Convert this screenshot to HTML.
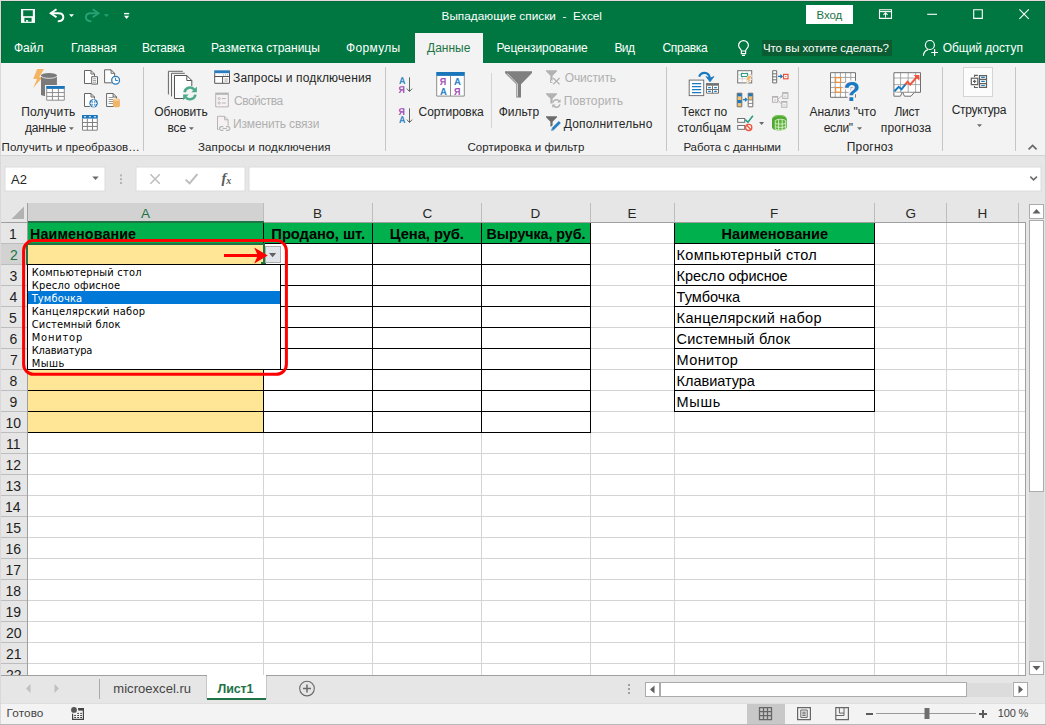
<!DOCTYPE html>
<html lang="ru"><head><meta charset="utf-8"><title>Выпадающие списки - Excel</title>
<style>
html,body{margin:0;padding:0;}
body{width:1046px;height:725px;overflow:hidden;position:relative;background:#e6e6e6;font-family:"Liberation Sans", sans-serif;}
#g{position:absolute;left:0;top:0;}
.t{position:absolute;white-space:pre;line-height:20px;height:20px;}
.dj{font-family:"DejaVu Sans Condensed", "DejaVu Sans", "Liberation Sans", sans-serif;}
</style></head><body>
<svg id="g" width="1046" height="725" viewBox="0 0 1046 725">
<rect x="0" y="0" width="1046" height="725" fill="#e6e6e6" />
<rect x="0" y="0" width="1046" height="63" fill="#007741" />
<rect x="415" y="33" width="68" height="31" fill="#f3f3f3" />
<rect x="0" y="63" width="1046" height="92" fill="#f3f3f3" />
<rect x="0" y="155" width="1046" height="1" fill="#d2d2d2" />
<rect x="762" y="40" width="130" height="16" fill="#0a5c32" />
<rect x="806" y="5" width="47" height="19" fill="#ffffff" />
<rect x="143" y="67" width="1" height="84" fill="#c6c6c6" />
<rect x="385" y="67" width="1" height="84" fill="#c6c6c6" />
<rect x="666" y="67" width="1" height="84" fill="#c6c6c6" />
<rect x="798" y="67" width="1" height="84" fill="#c6c6c6" />
<rect x="942" y="67" width="1" height="84" fill="#c6c6c6" />
<rect x="1015" y="67" width="1" height="84" fill="#c6c6c6" />
<rect x="491" y="73" width="1" height="55" fill="#d4d4d4" />
<rect x="5" y="167" width="100" height="24" fill="#ffffff" stroke="#dcdcdc" stroke-width="1"/>
<rect x="136" y="167" width="109" height="24" fill="#ffffff" stroke="#dcdcdc" stroke-width="1"/>
<rect x="249" y="167" width="792" height="24" fill="#ffffff" stroke="#dcdcdc" stroke-width="1"/>
<rect x="0" y="203" width="1026" height="19" fill="#e6e6e6" />
<rect x="0" y="222" width="28" height="453" fill="#e6e6e6" />
<rect x="28" y="223" width="997" height="452" fill="#ffffff" />
<rect x="28" y="203" width="235" height="19" fill="#d2d2d2" />
<rect x="0" y="244" width="27" height="20" fill="#d2d2d2" />
<rect x="28" y="243" width="997" height="1" fill="#d4d4d4" />
<rect x="28" y="264" width="997" height="1" fill="#d4d4d4" />
<rect x="28" y="285" width="997" height="1" fill="#d4d4d4" />
<rect x="28" y="306" width="997" height="1" fill="#d4d4d4" />
<rect x="28" y="327" width="997" height="1" fill="#d4d4d4" />
<rect x="28" y="348" width="997" height="1" fill="#d4d4d4" />
<rect x="28" y="369" width="997" height="1" fill="#d4d4d4" />
<rect x="28" y="390" width="997" height="1" fill="#d4d4d4" />
<rect x="28" y="411" width="997" height="1" fill="#d4d4d4" />
<rect x="28" y="432" width="997" height="1" fill="#d4d4d4" />
<rect x="28" y="453" width="997" height="1" fill="#d4d4d4" />
<rect x="28" y="474" width="997" height="1" fill="#d4d4d4" />
<rect x="28" y="495" width="997" height="1" fill="#d4d4d4" />
<rect x="28" y="516" width="997" height="1" fill="#d4d4d4" />
<rect x="28" y="537" width="997" height="1" fill="#d4d4d4" />
<rect x="28" y="558" width="997" height="1" fill="#d4d4d4" />
<rect x="28" y="579" width="997" height="1" fill="#d4d4d4" />
<rect x="28" y="600" width="997" height="1" fill="#d4d4d4" />
<rect x="28" y="621" width="997" height="1" fill="#d4d4d4" />
<rect x="28" y="642" width="997" height="1" fill="#d4d4d4" />
<rect x="28" y="663" width="997" height="1" fill="#d4d4d4" />
<rect x="263" y="223" width="1" height="452" fill="#d4d4d4" />
<rect x="372" y="223" width="1" height="452" fill="#d4d4d4" />
<rect x="481" y="223" width="1" height="452" fill="#d4d4d4" />
<rect x="590" y="223" width="1" height="452" fill="#d4d4d4" />
<rect x="674" y="223" width="1" height="452" fill="#d4d4d4" />
<rect x="874" y="223" width="1" height="452" fill="#d4d4d4" />
<rect x="946" y="223" width="1" height="452" fill="#d4d4d4" />
<rect x="1018" y="223" width="1" height="452" fill="#d4d4d4" />
<rect x="27" y="203" width="1" height="19" fill="#bdbdbd" />
<rect x="263" y="203" width="1" height="19" fill="#bdbdbd" />
<rect x="372" y="203" width="1" height="19" fill="#bdbdbd" />
<rect x="481" y="203" width="1" height="19" fill="#bdbdbd" />
<rect x="590" y="203" width="1" height="19" fill="#bdbdbd" />
<rect x="674" y="203" width="1" height="19" fill="#bdbdbd" />
<rect x="874" y="203" width="1" height="19" fill="#bdbdbd" />
<rect x="946" y="203" width="1" height="19" fill="#bdbdbd" />
<rect x="1018" y="203" width="1" height="19" fill="#bdbdbd" />
<rect x="0" y="243" width="27" height="1" fill="#bdbdbd" />
<rect x="0" y="264" width="27" height="1" fill="#bdbdbd" />
<rect x="0" y="285" width="27" height="1" fill="#bdbdbd" />
<rect x="0" y="306" width="27" height="1" fill="#bdbdbd" />
<rect x="0" y="327" width="27" height="1" fill="#bdbdbd" />
<rect x="0" y="348" width="27" height="1" fill="#bdbdbd" />
<rect x="0" y="369" width="27" height="1" fill="#bdbdbd" />
<rect x="0" y="390" width="27" height="1" fill="#bdbdbd" />
<rect x="0" y="411" width="27" height="1" fill="#bdbdbd" />
<rect x="0" y="432" width="27" height="1" fill="#bdbdbd" />
<rect x="0" y="453" width="27" height="1" fill="#bdbdbd" />
<rect x="0" y="474" width="27" height="1" fill="#bdbdbd" />
<rect x="0" y="495" width="27" height="1" fill="#bdbdbd" />
<rect x="0" y="516" width="27" height="1" fill="#bdbdbd" />
<rect x="0" y="537" width="27" height="1" fill="#bdbdbd" />
<rect x="0" y="558" width="27" height="1" fill="#bdbdbd" />
<rect x="0" y="579" width="27" height="1" fill="#bdbdbd" />
<rect x="0" y="600" width="27" height="1" fill="#bdbdbd" />
<rect x="0" y="621" width="27" height="1" fill="#bdbdbd" />
<rect x="0" y="642" width="27" height="1" fill="#bdbdbd" />
<rect x="0" y="663" width="27" height="1" fill="#bdbdbd" />
<rect x="0" y="222" width="1026" height="1" fill="#9f9f9f" />
<rect x="27" y="203" width="1" height="472" fill="#9f9f9f" />
<rect x="1025" y="222" width="1" height="454" fill="#9f9f9f" />
<rect x="0" y="675" width="1026" height="1" fill="#9f9f9f" />
<rect x="28" y="221" width="236" height="2" fill="#217346" />
<rect x="26" y="243" width="2" height="22" fill="#217346" />
<rect x="28" y="223" width="562" height="20" fill="#00b04c" />
<rect x="675" y="223" width="199" height="20" fill="#00b04c" />
<rect x="28" y="244" width="235" height="188" fill="#ffe696" />
<rect x="28" y="243" width="563" height="1" fill="#000000" />
<rect x="28" y="264" width="563" height="1" fill="#000000" />
<rect x="28" y="285" width="563" height="1" fill="#000000" />
<rect x="28" y="306" width="563" height="1" fill="#000000" />
<rect x="28" y="327" width="563" height="1" fill="#000000" />
<rect x="28" y="348" width="563" height="1" fill="#000000" />
<rect x="28" y="369" width="563" height="1" fill="#000000" />
<rect x="28" y="390" width="563" height="1" fill="#000000" />
<rect x="28" y="411" width="563" height="1" fill="#000000" />
<rect x="28" y="432" width="563" height="1" fill="#000000" />
<rect x="263" y="223" width="1" height="210" fill="#000000" />
<rect x="372" y="223" width="1" height="210" fill="#000000" />
<rect x="481" y="223" width="1" height="210" fill="#000000" />
<rect x="590" y="223" width="1" height="210" fill="#000000" />
<rect x="674" y="243" width="201" height="1" fill="#000000" />
<rect x="674" y="264" width="201" height="1" fill="#000000" />
<rect x="674" y="285" width="201" height="1" fill="#000000" />
<rect x="674" y="306" width="201" height="1" fill="#000000" />
<rect x="674" y="327" width="201" height="1" fill="#000000" />
<rect x="674" y="348" width="201" height="1" fill="#000000" />
<rect x="674" y="369" width="201" height="1" fill="#000000" />
<rect x="674" y="390" width="201" height="1" fill="#000000" />
<rect x="674" y="411" width="201" height="1" fill="#000000" />
<rect x="674" y="223" width="1" height="189" fill="#000000" />
<rect x="874" y="223" width="1" height="189" fill="#000000" />
<path d="M24 206.5v12.5h-12.5z" fill="#b2b2b2"/>
<rect x="26" y="243" width="238" height="2" fill="#217346" />
<rect x="26" y="243" width="2" height="22" fill="#217346" />
<rect x="263" y="243" width="2" height="21" fill="#217346" />
<rect x="261" y="262" width="5" height="3" fill="#217346" />
<rect x="27.5" y="264.5" width="253" height="105" fill="#ffffff" stroke="#000" stroke-width="1"/>
<rect x="28" y="291" width="252" height="13" fill="#0078d7" />
<rect x="265.5" y="246.5" width="15" height="16" fill="#e1e4e8" stroke="#adadad" stroke-width="1"/>
<path d="M269 253h7.2l-3.6 4.2z" fill="#606060"/>
<rect x="23.6" y="240.6" width="262.8" height="133.7" rx="10" ry="10" fill="none" stroke="#ff0000" stroke-width="3"/>
<path d="M224 255.4h35" stroke="#ff0000" stroke-width="3" fill="none"/>
<path d="M267.8 255.4L254.2 247.6L257.8 255.4L254.2 263.4Z" fill="#ff0000"/>
<rect x="1029" y="220" width="15" height="442" fill="#dcdcdc" />
<rect x="1029.5" y="204.5" width="14" height="14" fill="#ffffff" stroke="#ababab" stroke-width="1"/>
<path d="M1032.5 213.5l4 -4.5l4 4.5z" fill="#606060"/>
<rect x="1029.5" y="220.5" width="14" height="271" fill="#ffffff" stroke="#ababab" stroke-width="1"/>
<rect x="1029.5" y="661.5" width="14" height="13" fill="#ffffff" stroke="#ababab" stroke-width="1"/>
<path d="M1032.5 666l4 4.5l4 -4.5z" fill="#606060"/>
<rect x="660" y="683" width="352" height="14" fill="#dcdcdc" />
<rect x="645.5" y="682.5" width="14" height="14" fill="#ffffff" stroke="#ababab" stroke-width="1"/>
<path d="M654.5 685.5l-4.5 4l4.5 4z" fill="#606060"/>
<rect x="660.5" y="682.5" width="306" height="14" fill="#ffffff" stroke="#ababab" stroke-width="1"/>
<rect x="1013.5" y="682.5" width="14" height="14" fill="#ffffff" stroke="#ababab" stroke-width="1"/>
<path d="M1018.5 685.5l4.5 4l-4.5 4z" fill="#606060"/>
<rect x="628" y="684" width="2" height="2" fill="#a0a0a0" />
<rect x="628" y="688" width="2" height="2" fill="#a0a0a0" />
<rect x="628" y="692" width="2" height="2" fill="#a0a0a0" />
<rect x="99" y="679" width="1" height="20" fill="#ababab" />
<rect x="207" y="675" width="59" height="23" fill="#ffffff" />
<rect x="207" y="698" width="59" height="2" fill="#217346" />
<rect x="206" y="676" width="1" height="23" fill="#c8c8c8" />
<rect x="266" y="676" width="1" height="23" fill="#c8c8c8" />
<path d="M30.5 684l-4.5 4.5l4.5 4.5z" fill="#c0c0c0"/><path d="M54.5 684l4.5 4.5l-4.5 4.5z" fill="#c0c0c0"/>
<circle cx="307" cy="688.6" r="7.3" fill="none" stroke="#6a6a6a" stroke-width="1.1"/><path d="M303 688.6h8M307 684.6v8" stroke="#6a6a6a" stroke-width="1.5"/>
<rect x="0" y="703" width="1046" height="22" fill="#f3f3f3" />
<rect x="0" y="703" width="1046" height="1" fill="#dedede" />
<rect x="747" y="704" width="38" height="20" fill="#c8c8c8" />
<rect x="876" y="713" width="100" height="1" fill="#9a9a9a" />
<rect x="924.5" y="708" width="5" height="11" fill="#6e6e6e" />
<rect x="866" y="713" width="7" height="2" fill="#5a5a5a" />
<rect x="979" y="713" width="8" height="2" fill="#5a5a5a" />
<rect x="982" y="710" width="2" height="8" fill="#5a5a5a" />
<rect x="1" y="1" width="1044" height="1" fill="#0a6b38" />
<rect x="1" y="1" width="1" height="62" fill="#0a6b38" />
<rect x="1044" y="1" width="1" height="62" fill="#0a6b38" />
<rect x="0" y="0" width="1046" height="1" fill="#e2dce0" />
<rect x="0" y="0" width="1" height="725" fill="#dcd8da" />
<rect x="1045" y="0" width="1" height="725" fill="#d0d0d0" />
<rect x="0" y="724" width="1046" height="1" fill="#b8b8b8" />
<rect x="21" y="9" width="14" height="13.9" fill="#ffffff" />
<rect x="23.2" y="10.3" width="9.6" height="5.9" fill="#007741" />
<rect x="24.4" y="17.8" width="7.2" height="3.9" fill="#007741" />
<rect x="26" y="20.2" width="2.1" height="1.5" fill="#ffffff" />
<path d="M56.5 9.2L50.8 13.2L56.5 17.2" fill="none" stroke="#ffffff" stroke-width="2" />
<path d="M51.4 13.2H58.5C61.6 13.2 63.3 15 63.3 17.2C63.3 19.4 61.5 21 58.6 21.2" fill="none" stroke="#ffffff" stroke-width="2" stroke-linecap="round"/>
<path d="M69 14.2h5l-2.5 2.8z" fill="#ffffff" />
<path d="M92.7 9.2L98.4 13.2L92.7 17.2" fill="none" stroke="#27a173" stroke-width="2" />
<path d="M97.8 13.2H90.7C87.6 13.2 85.9 15 85.9 17.2C85.9 19.4 87.7 21 90.6 21.2" fill="none" stroke="#27a173" stroke-width="2" stroke-linecap="round"/>
<path d="M103.8 14.2h5.2l-2.6 2.8z" fill="#27a173" />
<rect x="124" y="12.9" width="5.2" height="1.4" fill="#ffffff" />
<path d="M124 15.8h5.2l-2.6 3.2z" fill="#ffffff" />
<path d="M879.5 9.8h12v8.6h-12z" fill="none" stroke="#ffffff" stroke-width="1.1" />
<path d="M879.5 11.6h12" fill="none" stroke="#ffffff" stroke-width="1.1" />
<path d="M885.5 17.6v-4.6M883.4 14.8l2.1 -2.1l2.1 2.1" fill="none" stroke="#ffffff" stroke-width="1.1" />
<path d="M927.2 14.3h9.8" fill="none" stroke="#ffffff" stroke-width="1.1" />
<path d="M973.7 9.8h8.6v8.6h-8.6z" fill="none" stroke="#ffffff" stroke-width="1.1" />
<path d="M1019.4 9.4l9.4 9.4M1028.8 9.4l-9.4 9.4" fill="none" stroke="#ffffff" stroke-width="1.1" />
<path d="M741.4 51C741.4 49 738.6 48.2 738.6 45.5A4.9 4.9 0 0 1 748.4 45.5C748.4 48.2 745.6 49 745.6 51V53.6H741.4Z" fill="none" stroke="#ffffff" stroke-width="1.2" />
<path d="M741.4 51h4.2M742 55.4h3" fill="none" stroke="#ffffff" stroke-width="1.2" />
<circle cx="929.9" cy="45" r="4.5" fill="none" stroke="#fff" stroke-width="1.2"/>
<path d="M923.4 55.8C923.6 52.6 925.4 50.4 928 49.6" fill="none" stroke="#ffffff" stroke-width="1.2" />
<path d="M931.2 52.5h6.8M934.6 49.1v6.8" fill="none" stroke="#ffffff" stroke-width="1.2" />
<path d="M68.9 127.2h5l-2.5 2.8z" fill="#6a6a6a" />
<path d="M188.9 127.2h5l-2.5 2.8z" fill="#6a6a6a" />
<path d="M759.1 122.10000000000001h5l-2.5 2.8z" fill="#6a6a6a" />
<path d="M857.1 127.2h5l-2.5 2.8z" fill="#6a6a6a" />
<path d="M977.0 124.2h5l-2.5 2.8z" fill="#6a6a6a" />
<path d="M1028.6 149.4l4 -4l4 4" fill="none" stroke="#6a6a6a" stroke-width="1.8" />
<path d="M1030.3 176.6l3.3 3.3l3.3 -3.3" fill="none" stroke="#6a6a6a" stroke-width="1.5" />
<path d="M37.1 69H44L39.3 77H42.9L33.2 88L37.1 78.9H33.2Z" fill="#f4b562" />
<path d="M41 75.3V94.2A7.95 2.3 0 0 0 56.9 94.2V75.3Z" fill="#7a7a7a" />
<ellipse cx="48.95" cy="75.3" rx="7.95" ry="2.3" fill="#7a7a7a"/>
<path d="M41 76A7.95 2.3 0 0 0 56.9 76" fill="none" stroke="#e8e8e8" stroke-width="0.9" />
<rect x="45" y="85" width="20.6" height="16.6" fill="#f3f3f3" />
<rect x="46.2" y="86" width="18.6" height="14.7" fill="#ffffff" />
<rect x="46.2" y="86" width="18.6" height="2.9" fill="#1a75bb" />
<path d="M46.7 88.9V100.2H64.3V88.9M52.4 89V100.2M58.4 89V100.2M46.7 92.6H64.3M46.7 96.4H64.3" fill="none" stroke="#8c8c8c" stroke-width="1" />
<path d="M84.5 70.5H91.0L94.5 74.0V83.5H84.5Z" fill="#ffffff" stroke="#666666" stroke-width="1" />
<path d="M91.0 70.5V74.0H94.5" fill="none" stroke="#666666" stroke-width="1" />
<rect x="91" y="76" width="7" height="8.6" fill="#f3f3f3" />
<path d="M91.7 76.7h5.8v7.4h-5.8z" fill="#ffffff" stroke="#666666" stroke-width="1" />
<path d="M93 78.8h3.2M93 80.5h3.2M93 82.2h3.2" fill="none" stroke="#8c8c8c" stroke-width="0.8" />
<path d="M104.6 69.8H111.1L114.6 73.3V82.8H104.6Z" fill="#ffffff" stroke="#666666" stroke-width="1" />
<path d="M111.1 69.8V73.3H114.6" fill="none" stroke="#666666" stroke-width="1" />
<circle cx="115.6" cy="80.3" r="4.6" fill="#f3f3f3"/><circle cx="115.6" cy="80.3" r="3.9" fill="#fff" stroke="#2a7ab8" stroke-width="1.3"/>
<path d="M115.6 77.8v2.7h2.2" fill="none" stroke="#2a7ab8" stroke-width="1" />
<path d="M84.5 93.5H91.0L94.5 97.0V106.5H84.5Z" fill="#ffffff" stroke="#666666" stroke-width="1" />
<path d="M91.0 93.5V97.0H94.5" fill="none" stroke="#666666" stroke-width="1" />
<circle cx="93.6" cy="103.3" r="4.9" fill="#f3f3f3"/><circle cx="93.6" cy="103.3" r="4.2" fill="#2a7ab8"/>
<path d="M90.2 103.3h6.8M93.6 100v6.6" fill="none" stroke="#fff" stroke-width="1.1" />
<ellipse cx="93.6" cy="103.3" rx="1.9" ry="3.6" fill="none" stroke="#fff" stroke-width="0.8"/>
<path d="M106.6 93.5H113.1L116.6 97.0V106.5H106.6Z" fill="#ffffff" stroke="#666666" stroke-width="1" />
<path d="M113.1 93.5V97.0H116.6" fill="none" stroke="#666666" stroke-width="1" />
<path d="M108.6 97.5h4.6M108.6 99.5h4.6M108.6 101.5h4.6M108.6 103.5h4.6" fill="none" stroke="#8c8c8c" stroke-width="0.9" />
<path d="M113 99.6V106A3.45 1.3 0 0 0 119.9 106V99.6Z" fill="#f1b469" />
<ellipse cx="116.45" cy="99.6" rx="3.45" ry="1.3" fill="#f6cf9b"/>
<rect x="82" y="115" width="15.8" height="15.7" fill="#ffffff" />
<rect x="82" y="115" width="15.8" height="3.6" fill="#1a75bb" />
<path d="M82.5 118.6V130.2H97.3V118.6M87.3 118.6V130.2M92.5 118.6V130.2M82.5 122.5H97.3M82.5 126.4H97.3" fill="none" stroke="#808080" stroke-width="1" />
<path d="M84 116.8h2M88.9 116.8h2M93.9 116.8h2" fill="none" stroke="#fff" stroke-width="1" />
<path d="M168.4 94.4V71.3H182.8" fill="none" stroke="#666" stroke-width="1" />
<path d="M171.5 96.4V73.3H184.8" fill="none" stroke="#666" stroke-width="1" />
<path d="M174.5 75.5H186.8L191.8 80.5V98.5H174.5Z" fill="#ffffff" stroke="#555" stroke-width="1" />
<path d="M186.8 75.5V80.5H191.8" fill="none" stroke="#555" stroke-width="1" />
<circle cx="190" cy="93.4" r="7.6" fill="#f3f3f3"/>
<path d="M184.6 92.2A5.5 5.5 0 0 1 194.3 89.6" fill="none" stroke="#4baa8b" stroke-width="2.6" />
<path d="M195.4 94.6A5.5 5.5 0 0 1 185.7 97.2" fill="none" stroke="#4baa8b" stroke-width="2.6" />
<path d="M196.9 86.6V92.2H191.3Z" fill="#4baa8b" />
<path d="M183.1 100.2V94.6H188.7Z" fill="#4baa8b" />
<rect x="214.2" y="70.3" width="15.8" height="13.5" fill="#ffffff" />
<rect x="214.2" y="70.3" width="15.8" height="2.9" fill="#2b7bbf" />
<path d="M214.7 73.2V83.3H229.5V73.2M214.7 76.5H229.5M222.6 76.5V83.3" fill="none" stroke="#555" stroke-width="1" />
<path d="M224.4 79h3.4M224.4 81h3.4" fill="none" stroke="#888" stroke-width="0.8" />
<path d="M223 74.9h1M225 74.9h1M227 74.9h1" fill="none" stroke="#888" stroke-width="0.8" />
<rect x="215.2" y="92.6" width="13.6" height="14.8" fill="#f7f1f3" />
<rect x="215.2" y="92.6" width="13.6" height="2.2" fill="#b4b4b4" />
<path d="M215.7 94.5V106.9H228.3V94.5" fill="none" stroke="#b4b4b4" stroke-width="1" />
<circle cx="219.2" cy="98.6" r="1.1" fill="none" stroke="#b4b4b4" stroke-width="0.9"/><circle cx="219.2" cy="103" r="1.1" fill="none" stroke="#b4b4b4" stroke-width="0.9"/>
<path d="M221.8 98.6h4M221.8 103h4" fill="none" stroke="#b4b4b4" stroke-width="1" />
<path d="M217.5 116.3H224.6L228.1 119.8V129.5H217.5Z" fill="#f7f1f3" stroke="#b4b4b4" stroke-width="1" />
<path d="M224.6 116.3V119.8H228.1" fill="none" stroke="#b4b4b4" stroke-width="1" />
<rect x="218.6" y="125.6" width="12" height="6" fill="#f3f3f3" />
<path d="M223.4 126.6H221.4A1.9 1.9 0 0 0 221.4 130.4H223.4M226 126.6H228A1.9 1.9 0 0 1 228 130.4H226M222.6 128.5H226.8" fill="none" stroke="#b4b4b4" stroke-width="1.2" />
<text transform="translate(398.90000000000003,83.9) rotate(0.03)" x="0" y="0" font-family="Liberation Sans, sans-serif" font-weight="bold" font-size="9.9" fill="#2a80c3" textLength="6.4" lengthAdjust="spacingAndGlyphs">А</text>
<text transform="translate(398.6,92.7) rotate(0.03)" x="0" y="0" font-family="Liberation Sans, sans-serif" font-weight="bold" font-size="9.9" fill="#a24fb8" textLength="6.4" lengthAdjust="spacingAndGlyphs">Я</text>
<path d="M409.5 77.3V91.4M406.8 88.6l2.7 2.9l2.7 -2.9" fill="none" stroke="#666" stroke-width="1" />
<text transform="translate(398.6,115) rotate(0.03)" x="0" y="0" font-family="Liberation Sans, sans-serif" font-weight="bold" font-size="9.9" fill="#a24fb8" textLength="6.4" lengthAdjust="spacingAndGlyphs">Я</text>
<text transform="translate(398.90000000000003,122.8) rotate(0.03)" x="0" y="0" font-family="Liberation Sans, sans-serif" font-weight="bold" font-size="9.9" fill="#2a80c3" textLength="6.4" lengthAdjust="spacingAndGlyphs">А</text>
<path d="M409.5 108.3V122.4M406.8 119.6l2.7 2.9l2.7 -2.9" fill="none" stroke="#666" stroke-width="1" />
<rect x="436.2" y="72" width="28.6" height="24.6" fill="#ffffff" />
<rect x="436.2" y="72" width="28.6" height="3.9" fill="#1a75bb" />
<path d="M436.7 75.9V96.1H464.3V75.9M450.5 75.9V96.1" fill="none" stroke="#8a8a8a" stroke-width="1" />
<text transform="translate(439.85,84.9) rotate(0.03)" x="0" y="0" font-family="Liberation Sans, sans-serif" font-weight="bold" font-size="10.1" fill="#a24fb8" textLength="6.5" lengthAdjust="spacingAndGlyphs">Я</text>
<text transform="translate(439.95,94.9) rotate(0.03)" x="0" y="0" font-family="Liberation Sans, sans-serif" font-weight="bold" font-size="10.1" fill="#2a80c3" textLength="6.9" lengthAdjust="spacingAndGlyphs">А</text>
<text transform="translate(453.95,84.9) rotate(0.03)" x="0" y="0" font-family="Liberation Sans, sans-serif" font-weight="bold" font-size="10.1" fill="#2a80c3" textLength="6.9" lengthAdjust="spacingAndGlyphs">А</text>
<text transform="translate(454.05,94.9) rotate(0.03)" x="0" y="0" font-family="Liberation Sans, sans-serif" font-weight="bold" font-size="10.1" fill="#a24fb8" textLength="6.5" lengthAdjust="spacingAndGlyphs">Я</text>
<path d="M505 71.2H532V73L521 84.2V97.4H516.3V84.2L505 73Z" fill="#7f7f7f" />
<path d="M507.2 73.4L517.4 83.9V96.6" fill="none" stroke="#f0f0f0" stroke-width="0.8" />
<path d="M546 70.3h11v0.9l-4.4 4.6v4.6h-2.2v-4.6l-4.4 -4.6z" fill="#b2b2b2" />
<path d="M553.2 78l6.4 6.4M559.6 78l-6.4 6.4" fill="none" stroke="#b2b2b2" stroke-width="1.3" />
<path d="M550.5 79.5v3h2" fill="none" stroke="#b2b2b2" stroke-width="1" />
<path d="M546 93.3h11v0.9l-4.4 4.6v4.6h-2.2v-4.6l-4.4 -4.6z" fill="#b2b2b2" />
<path d="M552.9 102.6A3.6 3.6 0 0 1 559.3 101.2M559.9 104.4A3.6 3.6 0 0 1 553.5 105.8" fill="none" stroke="#b2b2b2" stroke-width="1.5" />
<path d="M560.6 99.2v3.4h-3.4zM552.2 107.8v-3.4h3.4z" fill="#b2b2b2" />
<path d="M546 116.3h11v0.9l-4.4 4.6v4.6h-2.2v-4.6l-4.4 -4.6z" fill="#6c6c6c" />
<path d="M551 130.8L560.6 121.2" fill="none" stroke="#f3f3f3" stroke-width="5.2" />
<path d="M552.6 129.2L559.8 122" fill="none" stroke="#2a80c3" stroke-width="2.8" />
<path d="M551.2 130.9l0.6 -2.3l1.7 1.7z" fill="#2a80c3" />
<rect x="689.2" y="80.1" width="14.5" height="15.5" fill="#ffffff" stroke="#707070" stroke-width="1"/>
<path d="M692 83.6h9.2M692 86.6h9.2M692 89.6h9.2M692 92.6h9.2" fill="none" stroke="#1a7abf" stroke-width="1.3" />
<rect x="706" y="83.1" width="13" height="10.6" fill="#ffffff" />
<rect x="706" y="83.1" width="13" height="2.6" fill="#707070" />
<path d="M706.5 85.7V93.2H718.5V85.7M712.5 85.7V93.2M706.5 89.5H718.5" fill="none" stroke="#707070" stroke-width="1" />
<path d="M708.2 87.6h2.6M714.2 87.6h2.6M708.2 91.4h2.6M714.2 91.4h2.6" fill="none" stroke="#1a7abf" stroke-width="1.2" />
<path d="M699.2 76.8C700.5 72 708.8 70.5 710 78.5" fill="none" stroke="#1a7abf" stroke-width="2.2" />
<path d="M706 76.5L710 81.8L714 76.5L710 78.2Z" fill="#1a7abf" stroke="#1a7abf" stroke-width="0.8" />
<rect x="737.7" y="70.7" width="14" height="12.2" fill="#ffffff" stroke="#707070" stroke-width="1"/>
<path d="M737.7 74.8h14M737.7 78.8h14M742.3 70.7v12.2M747 70.7v12.2" fill="none" stroke="#c8c8c8" stroke-width="0.8" />
<rect x="741.4" y="73.5" width="6.1" height="3" fill="#fff" stroke="#2e9e82" stroke-width="1.1"/>
<path d="M748.2 75.4L752.5 75.4L749.6 79.4L751.8 79.4L745.8 84.9L748.2 80.4L745.8 80.4Z" fill="#f4b266" stroke="#f3f3f3" stroke-width="0.7" />
<rect x="737.2" y="93.2" width="4.6" height="3.4" fill="#1a7abf" />
<rect x="737.2" y="96.60000000000001" width="4.6" height="3.4" fill="#f4c06e" />
<rect x="737.2" y="100.0" width="4.6" height="3.4" fill="#1a7abf" />
<rect x="737.2" y="103.4" width="4.6" height="3.4" fill="#f4c06e" />
<path d="M737.2 93.2h4.6v13.6h-4.6z" fill="none" stroke="#707070" stroke-width="1" />
<rect x="748.2" y="93.2" width="4.6" height="3.4" fill="#1a7abf" />
<rect x="748.2" y="96.60000000000001" width="4.6" height="3.4" fill="#f4c06e" />
<rect x="748.2" y="100.0" width="4.6" height="3.4" fill="#fff" />
<rect x="748.2" y="103.4" width="4.6" height="3.4" fill="#fff" />
<path d="M748.2 93.2h4.6v13.6h-4.6z" fill="none" stroke="#707070" stroke-width="1" />
<path d="M748.2 100h4.6M748.2 103.4h4.6" fill="none" stroke="#707070" stroke-width="0.8" />
<path d="M743 99.6h3.6M745 97.8l1.8 1.8l-1.8 1.8" fill="none" stroke="#1a7abf" stroke-width="1.2" />
<rect x="737.7" y="118.5" width="7" height="3.8" fill="#ffffff" stroke="#707070" stroke-width="1"/>
<rect x="737.7" y="125.5" width="7" height="3.8" fill="#ffffff" stroke="#707070" stroke-width="1"/>
<path d="M745.3 119.6l2.6 2.6l5 -6.4" fill="none" stroke="#2e9e82" stroke-width="1.6" />
<circle cx="748.7" cy="127.4" r="3.1" fill="#fff" stroke="#f0523a" stroke-width="1.3"/>
<path d="M746.6 125.3l4.2 4.2" fill="none" stroke="#f0523a" stroke-width="1.3" />
<path d="M772.7 70.7h4v12.2h-4zM772.7 73.8h4M772.7 76.8h4M772.7 79.8h4" fill="#ffffff" stroke="#707070" stroke-width="1" />
<path d="M778 76.4h4M780.4 74.6l1.8 1.8l-1.8 1.8" fill="none" stroke="#1a7abf" stroke-width="1.2" />
<rect x="783.6" y="74.4" width="4.4" height="4.4" fill="#ffffff" stroke="#f0523a" stroke-width="1.2"/>
<rect x="785.3" y="76.1" width="1" height="1" fill="#707070" />
<path d="M777.5 99.3L782.4 95.4M777.5 99.3L781.4 104.2" fill="none" stroke="#bdbdbd" stroke-width="1" />
<rect x="772.5" y="96.5" width="5.2" height="5.8" fill="#f7f1f3" stroke="#b4b4b4" stroke-width="1"/>
<rect x="772.5" y="96.5" width="5.2" height="1.2" fill="#b4b4b4" />
<path d="M774.1 100.1h2" fill="none" stroke="#b4b4b4" stroke-width="0.8" />
<rect x="782.7" y="92.6" width="5.2" height="5.8" fill="#f7f1f3" stroke="#b4b4b4" stroke-width="1"/>
<rect x="782.7" y="92.6" width="5.2" height="1.2" fill="#b4b4b4" />
<path d="M784.3000000000001 96.19999999999999h2" fill="none" stroke="#b4b4b4" stroke-width="0.8" />
<rect x="781.7" y="101.5" width="5.2" height="5.8" fill="#f7f1f3" stroke="#b4b4b4" stroke-width="1"/>
<rect x="781.7" y="101.5" width="5.2" height="1.2" fill="#b4b4b4" />
<path d="M783.3000000000001 105.1h2" fill="none" stroke="#b4b4b4" stroke-width="0.8" />
<path d="M772 119.5C772 113.6 786.8 113.6 786.8 119.5V127C786.8 131.8 772 131.8 772 127Z" fill="#4ea72e" />
<path d="M775.2 120.5C778 118.6 783 118.8 785.6 120.4V129.2C782.6 130.4 778.4 130.4 775.2 129.2Z" fill="#5cb53a" stroke="#e8f5e0" stroke-width="0.8" />
<path d="M778.6 119.4V130M782.2 119.4V130M775.2 123.4C778 124.4 783 124.4 785.6 123.4M775.2 126.6C778 127.6 783 127.6 785.6 126.6" fill="none" stroke="#e8f5e0" stroke-width="0.8" />
<path d="M772.8 117.6C775.6 115 783.4 115 786 117.6" fill="none" stroke="#8fd06f" stroke-width="0.9" />
<rect x="830.5" y="72.7" width="25" height="24.6" fill="#ffffff" />
<path d="M835.2 72.7V97.3M840.4 72.7V97.3M845.6 72.7V97.3M850.8 72.7V97.3M830.5 77.4H855.5M830.5 82.4H855.5M830.5 87.4H855.5M830.5 92.4H855.5" fill="none" stroke="#9a9a9a" stroke-width="0.9" />
<path d="M830.5 72.7H855.5V97.3H830.5Z" fill="none" stroke="#707070" stroke-width="1" />
<rect x="835.6" y="77.7" width="5" height="4.6" fill="#ffffff" stroke="#f28c38" stroke-width="1.2"/>
<rect x="835.6" y="87.6" width="5" height="4.6" fill="#ffffff" stroke="#f28c38" stroke-width="1.2"/>
<text x="851.8" y="100.6" font-family="Liberation Sans, sans-serif" font-weight="bold" font-size="27" fill="#f3f3f3" stroke="#f3f3f3" stroke-width="3.4" text-anchor="middle">?</text>
<text x="851.8" y="100.6" font-family="Liberation Sans, sans-serif" font-weight="bold" font-size="27" fill="#1a7abf" text-anchor="middle">?</text>
<rect x="893.9" y="72.7" width="26.6" height="19.6" fill="#ffffff" />
<path d="M900.6 72.7V92.3M908.2 72.7V92.3M915.6 72.7V92.3M893.9 78H920.5M893.9 84.6H920.5" fill="none" stroke="#a0a0a0" stroke-width="0.9" />
<path d="M893.9 72.7H920.5V92.3H893.9Z" fill="none" stroke="#707070" stroke-width="1" />
<path d="M893.9 92.3V96.2H900.4L902 92.8M903 92.8L904.4 96.2H911L914 92.8" fill="#ffffff" stroke="#707070" stroke-width="1" />
<path d="M894.4 91.2L898.7 86.8L901.5 89.4L905.4 84.4" fill="none" stroke="#1a7abf" stroke-width="2" />
<path d="M905.2 84.6L907.5 81.8L910.2 84.6L917.4 76.4" fill="none" stroke="#f0523a" stroke-width="2" />
<path d="M913.6 75H919.4V80.8Z" fill="#f0523a" />
<rect x="963.5" y="67.5" width="29" height="29" fill="#fcfcfc" stroke="#d4d4d4" stroke-width="1"/>
<rect x="971.3" y="78.2" width="6.5" height="6.4" fill="#ffffff" stroke="#606060" stroke-width="1.2"/>
<path d="M973 81.4h3.2M974.6 79.8v3.2" fill="none" stroke="#606060" stroke-width="1.1" />
<path d="M974.5 76.9V75.4H977.9M974.5 86V87.5H977.9" fill="none" stroke="#606060" stroke-width="1.1" />
<path d="M979.5 75.6h7v11.8h-7zM979.5 79.3h7M979.5 83.6h7" fill="#ffffff" stroke="#606060" stroke-width="1.2" />
<path d="M981.2 77.4h3.6M981.2 81.4h3.6M981.2 85.5h3.6" fill="none" stroke="#1a7abf" stroke-width="1.2" />
<path d="M92.3 176.4h6.4l-3.2 3.6z" fill="#6a6a6a" />
<rect x="120" y="174.4" width="2" height="2" fill="#b4b4b4" />
<rect x="120" y="178.2" width="2" height="2" fill="#b4b4b4" />
<rect x="120" y="182" width="2" height="2" fill="#b4b4b4" />
<path d="M150.4 174.3l9.4 9.4M159.8 174.3l-9.4 9.4" fill="none" stroke="#bcbcbc" stroke-width="1.5" />
<path d="M185.6 179.6l4 3.8l7.8 -9.2" fill="none" stroke="#bcbcbc" stroke-width="2" />
<text x="221.6" y="183.4" font-family="Liberation Serif, serif" font-style="italic" font-weight="bold" font-size="14.5" fill="#5a5a5a">f</text>
<text x="226.2" y="183.6" font-family="Liberation Serif, serif" font-style="italic" font-weight="bold" font-size="10" fill="#5a5a5a">x</text>
<circle cx="74" cy="709.9" r="2.9" fill="#555"/>
<path d="M72.6 713.8V719.3H83.4V708.6H78" fill="none" stroke="#444" stroke-width="1.2" />
<rect x="78.3" y="708" width="5.7" height="2.6" fill="#444" />
<rect x="77.2" y="712.9" width="1.8" height="1" fill="#444" />
<rect x="80.2" y="712.9" width="1.8" height="1" fill="#444" />
<rect x="74.2" y="715.0" width="1.8" height="1" fill="#444" />
<rect x="77.2" y="715.0" width="1.8" height="1" fill="#444" />
<rect x="80.2" y="715.0" width="1.8" height="1" fill="#444" />
<rect x="74.2" y="717.0" width="1.8" height="1" fill="#444" />
<rect x="77.2" y="717.0" width="1.8" height="1" fill="#444" />
<rect x="80.2" y="717.0" width="1.8" height="1" fill="#444" />
<path d="M759.5 707.7h12v12h-12zM763.5 707.7v12M767.5 707.7v12M759.5 711.7h12M759.5 715.7h12" fill="none" stroke="#666666" stroke-width="1.3" />
<path d="M797.6 707.7h12.8v12h-12.8z" fill="none" stroke="#666666" stroke-width="1.2" />
<path d="M800.8 710h6.4v7.4h-6.4zM802.3 712.2h3.4M802.3 713.8h3.4M802.3 715.4h3.4" fill="none" stroke="#666666" stroke-width="1" />
<path d="M835.8 707.7h12.6v12h-12.6z" fill="none" stroke="#666666" stroke-width="1.2" />
<path d="M839.4 707.7v5.4h4.6v-5.4M844 713.1v2.4h-8" fill="none" stroke="#666666" stroke-width="1" />
</svg>
<span class="t" id="t0" style="top:6.00px;font-size:11.75px;color:#ffffff;letter-spacing:0.038px;left:441.50px;">Выпадающие списки  -  Excel</span>
<span class="t" id="t1" style="top:5.00px;font-size:11.5px;color:#217346;letter-spacing:-0.167px;left:816.60px;">Вход</span>
<span class="t" id="t2" style="top:38.00px;font-size:12px;color:#ffffff;left:14.00px;">Файл</span>
<span class="t" id="t3" style="top:38.00px;font-size:12px;color:#ffffff;left:71.00px;">Главная</span>
<span class="t" id="t4" style="top:38.00px;font-size:12px;color:#ffffff;letter-spacing:-0.333px;left:142.00px;">Вставка</span>
<span class="t" id="t5" style="top:38.00px;font-size:12px;color:#ffffff;left:211.00px;">Разметка страницы</span>
<span class="t" id="t6" style="top:38.00px;font-size:12px;color:#ffffff;letter-spacing:0.333px;left:346.00px;">Формулы</span>
<span class="t" id="t7" style="top:38.00px;font-size:12px;color:#217346;left:427.00px;">Данные</span>
<span class="t" id="t8" style="top:38.00px;font-size:12px;color:#ffffff;letter-spacing:-0.115px;left:496.50px;">Рецензирование</span>
<span class="t" id="t9" style="top:38.00px;font-size:12px;color:#ffffff;letter-spacing:-0.600px;left:614.40px;">Вид</span>
<span class="t" id="t10" style="top:38.00px;font-size:12px;color:#ffffff;letter-spacing:-0.283px;left:662.40px;">Справка</span>
<span class="t" id="t11" style="top:38.00px;font-size:11.5px;color:#ffffff;letter-spacing:-0.048px;left:762.90px;">Что вы хотите сделать?</span>
<span class="t" id="t12" style="top:38.00px;font-size:12px;color:#ffffff;letter-spacing:-0.036px;left:942.70px;">Общий доступ</span>
<span class="t" id="t13" style="top:102.00px;font-size:12px;color:#262626;letter-spacing:0.200px;left:21.20px;">Получить</span>
<span class="t" id="t14" style="top:118.00px;font-size:12px;color:#262626;letter-spacing:-0.200px;left:25.00px;">данные</span>
<span class="t" id="t15" style="top:137.00px;font-size:11.5px;color:#262626;letter-spacing:0.048px;left:1.60px;">Получить и преобразов…</span>
<span class="t" id="t16" style="top:102.00px;font-size:12px;color:#262626;letter-spacing:-0.129px;left:154.30px;">Обновить</span>
<span class="t" id="t17" style="top:118.00px;font-size:12px;color:#262626;letter-spacing:-0.100px;left:167.40px;">все</span>
<span class="t" id="t18" style="top:68.00px;font-size:12px;color:#262626;letter-spacing:0.135px;left:233.00px;">Запросы и подключения</span>
<span class="t" id="t19" style="top:91.00px;font-size:12px;color:#b0b0b0;letter-spacing:-0.500px;left:234.00px;">Свойства</span>
<span class="t" id="t20" style="top:114.00px;font-size:12px;color:#b0b0b0;letter-spacing:-0.154px;left:233.00px;">Изменить связи</span>
<span class="t" id="t21" style="top:137.00px;font-size:11.5px;color:#262626;letter-spacing:0.125px;left:198.00px;">Запросы и подключения</span>
<span class="t" id="t22" style="top:102.00px;font-size:12px;color:#262626;letter-spacing:-0.078px;left:418.60px;">Сортировка</span>
<span class="t" id="t23" style="top:102.00px;font-size:12px;color:#262626;letter-spacing:0.020px;left:498.70px;">Фильтр</span>
<span class="t" id="t24" style="top:68.00px;font-size:12px;color:#b0b0b0;letter-spacing:-0.129px;left:564.70px;">Очистить</span>
<span class="t" id="t25" style="top:91.00px;font-size:12px;color:#b0b0b0;letter-spacing:0.100px;left:563.70px;">Повторить</span>
<span class="t" id="t26" style="top:114.00px;font-size:12px;color:#262626;letter-spacing:0.192px;left:563.70px;">Дополнительно</span>
<span class="t" id="t27" style="top:137.00px;font-size:11.5px;color:#262626;letter-spacing:0.089px;left:467.40px;">Сортировка и фильтр</span>
<span class="t" id="t28" style="top:102.00px;font-size:12px;color:#262626;letter-spacing:-0.157px;left:681.50px;">Текст по</span>
<span class="t" id="t29" style="top:118.00px;font-size:12px;color:#262626;letter-spacing:0.014px;left:677.50px;">столбцам</span>
<span class="t" id="t30" style="top:137.00px;font-size:11.5px;color:#262626;letter-spacing:-0.060px;left:683.40px;">Работа с данными</span>
<span class="t" id="t31" style="top:102.00px;font-size:12px;color:#262626;letter-spacing:0.040px;left:809.40px;">Анализ "что</span>
<span class="t" id="t32" style="top:118.00px;font-size:12px;color:#262626;letter-spacing:-0.325px;left:823.70px;">если"</span>
<span class="t" id="t33" style="top:102.00px;font-size:12px;color:#262626;letter-spacing:-0.200px;left:894.40px;">Лист</span>
<span class="t" id="t34" style="top:118.00px;font-size:12px;color:#262626;letter-spacing:0.129px;left:880.80px;">прогноза</span>
<span class="t" id="t35" style="top:137.00px;font-size:12px;color:#262626;letter-spacing:0.217px;left:846.70px;">Прогноз</span>
<span class="t" id="t36" style="top:100.00px;font-size:12px;color:#262626;letter-spacing:-0.275px;left:951.70px;">Структура</span>
<span class="t" id="t37" style="top:170.00px;font-size:13.0px;color:#262626;left:11.00px;">A2</span>
<span class="t" id="t38" style="top:204.00px;font-size:13.5px;color:#217346;left:141.00px;">A</span>
<span class="t" id="t39" style="top:204.00px;font-size:13.5px;color:#262626;left:313.00px;">B</span>
<span class="t" id="t40" style="top:204.00px;font-size:13.5px;color:#262626;left:422.50px;">C</span>
<span class="t" id="t41" style="top:204.00px;font-size:13.5px;color:#262626;left:530.50px;">D</span>
<span class="t" id="t42" style="top:204.00px;font-size:13.5px;color:#262626;left:627.50px;">E</span>
<span class="t" id="t43" style="top:204.00px;font-size:13.5px;color:#262626;left:770.00px;">F</span>
<span class="t" id="t44" style="top:204.00px;font-size:13.5px;color:#262626;left:905.50px;">G</span>
<span class="t" id="t45" style="top:204.00px;font-size:13.5px;color:#262626;left:977.50px;">H</span>
<span class="t" id="t46" style="top:224.00px;font-size:14px;color:#1e1e1e;left:9.00px;">1</span>
<span class="t" id="t47" style="top:245.00px;font-size:14px;color:#217346;left:10.00px;">2</span>
<span class="t" id="t48" style="top:266.00px;font-size:14px;color:#1e1e1e;left:9.50px;">3</span>
<span class="t" id="t49" style="top:287.00px;font-size:14px;color:#1e1e1e;left:9.50px;">4</span>
<span class="t" id="t50" style="top:308.00px;font-size:14px;color:#1e1e1e;left:9.00px;">5</span>
<span class="t" id="t51" style="top:329.00px;font-size:14px;color:#1e1e1e;left:9.50px;">6</span>
<span class="t" id="t52" style="top:350.00px;font-size:14px;color:#1e1e1e;left:10.00px;">7</span>
<span class="t" id="t53" style="top:371.00px;font-size:14px;color:#1e1e1e;left:9.50px;">8</span>
<span class="t" id="t54" style="top:392.00px;font-size:14px;color:#1e1e1e;left:9.50px;">9</span>
<span class="t" id="t55" style="top:413.00px;font-size:14px;color:#1e1e1e;left:5.50px;">10</span>
<span class="t" id="t56" style="top:434.00px;font-size:14px;color:#1e1e1e;left:6.00px;">11</span>
<span class="t" id="t57" style="top:455.00px;font-size:14px;color:#1e1e1e;left:5.50px;">12</span>
<span class="t" id="t58" style="top:476.00px;font-size:14px;color:#1e1e1e;left:5.50px;">13</span>
<span class="t" id="t59" style="top:497.00px;font-size:14px;color:#1e1e1e;left:5.00px;">14</span>
<span class="t" id="t60" style="top:518.00px;font-size:14px;color:#1e1e1e;left:5.50px;">15</span>
<span class="t" id="t61" style="top:539.00px;font-size:14px;color:#1e1e1e;left:5.50px;">16</span>
<span class="t" id="t62" style="top:560.00px;font-size:14px;color:#1e1e1e;left:5.50px;">17</span>
<span class="t" id="t63" style="top:581.00px;font-size:14px;color:#1e1e1e;left:5.50px;">18</span>
<span class="t" id="t64" style="top:602.00px;font-size:14px;color:#1e1e1e;left:5.50px;">19</span>
<span class="t" id="t65" style="top:623.00px;font-size:14px;color:#1e1e1e;left:6.00px;">20</span>
<span class="t" id="t66" style="top:644.00px;font-size:14px;color:#1e1e1e;left:6.00px;">21</span>
<span class="t" id="t67" style="top:665.00px;font-size:14px;color:#1e1e1e;left:6.00px;height:10.00px;overflow:hidden;">22</span>
<span class="t" id="t68" style="top:224.00px;font-size:14.25px;color:#000000;font-weight:bold;letter-spacing:0.136px;left:30.00px;">Наименование</span>
<span class="t" id="t69" style="top:224.00px;font-size:14.75px;color:#000000;font-weight:bold;letter-spacing:-0.064px;left:271.35px;">Продано, шт.</span>
<span class="t" id="t70" style="top:224.00px;font-size:14.75px;color:#000000;font-weight:bold;letter-spacing:-0.056px;left:389.75px;">Цена, руб.</span>
<span class="t" id="t71" style="top:224.00px;font-size:14.25px;color:#000000;font-weight:bold;letter-spacing:-0.050px;left:486.60px;">Выручка, руб.</span>
<span class="t" id="t72" style="top:224.00px;font-size:14.5px;color:#000000;font-weight:bold;left:721.60px;">Наименование</span>
<span class="t" id="t73" style="top:245.00px;font-size:14.5px;color:#000000;letter-spacing:0.287px;left:676.60px;">Компьютерный стол</span>
<span class="t" id="t74" style="top:266.00px;font-size:14.5px;color:#000000;letter-spacing:-0.077px;left:676.60px;">Кресло офисное</span>
<span class="t" id="t75" style="top:287.00px;font-size:14.5px;color:#000000;letter-spacing:0.043px;left:676.60px;">Тумбочка</span>
<span class="t" id="t76" style="top:308.00px;font-size:14.5px;color:#000000;letter-spacing:0.353px;left:676.60px;">Канцелярский набор</span>
<span class="t" id="t77" style="top:329.00px;font-size:14.5px;color:#000000;letter-spacing:0.154px;left:676.60px;">Системный блок</span>
<span class="t" id="t78" style="top:350.00px;font-size:14.5px;color:#000000;letter-spacing:0.383px;left:676.60px;">Монитор</span>
<span class="t" id="t79" style="top:371.00px;font-size:14.5px;color:#000000;letter-spacing:-0.033px;left:676.60px;">Клавиатура</span>
<span class="t" id="t80" style="top:392.00px;font-size:14.5px;color:#000000;letter-spacing:0.667px;left:676.60px;">Мышь</span>
<span class="t dj" id="t81" style="top:263.00px;font-size:11px;color:#000000;letter-spacing:0.188px;left:31.70px;">Компьютерный стол</span>
<span class="t dj" id="t82" style="top:276.00px;font-size:11px;color:#000000;letter-spacing:0.231px;left:31.70px;">Кресло офисное</span>
<span class="t dj" id="t83" style="top:289.00px;font-size:11px;color:#ffffff;letter-spacing:0.143px;left:31.70px;">Тумбочка</span>
<span class="t dj" id="t84" style="top:302.00px;font-size:11px;color:#000000;letter-spacing:0.235px;left:31.70px;">Канцелярский набор</span>
<span class="t dj" id="t85" style="top:315.00px;font-size:11px;color:#000000;letter-spacing:0.177px;left:31.70px;">Системный блок</span>
<span class="t dj" id="t86" style="top:328.00px;font-size:11px;color:#000000;letter-spacing:0.833px;left:31.70px;">Монитор</span>
<span class="t dj" id="t87" style="top:341.00px;font-size:11px;color:#000000;letter-spacing:-0.111px;left:31.70px;">Клавиатура</span>
<span class="t dj" id="t88" style="top:354.00px;font-size:11px;color:#000000;letter-spacing:0.500px;left:31.70px;">Мышь</span>
<span class="t" id="t89" style="top:679.00px;font-size:13.0px;color:#444444;letter-spacing:0.042px;left:113.30px;">microexcel.ru</span>
<span class="t" id="t90" style="top:679.00px;font-size:12.5px;color:#217346;font-weight:bold;letter-spacing:-0.125px;left:217.50px;">Лист1</span>
<span class="t" id="t91" style="top:703.00px;font-size:11.75px;color:#444444;letter-spacing:0.100px;left:6.60px;">Готово</span>
<span class="t" id="t92" style="top:703.00px;font-size:11px;color:#444444;letter-spacing:-0.150px;left:997.80px;">100 %</span>
</body></html>
